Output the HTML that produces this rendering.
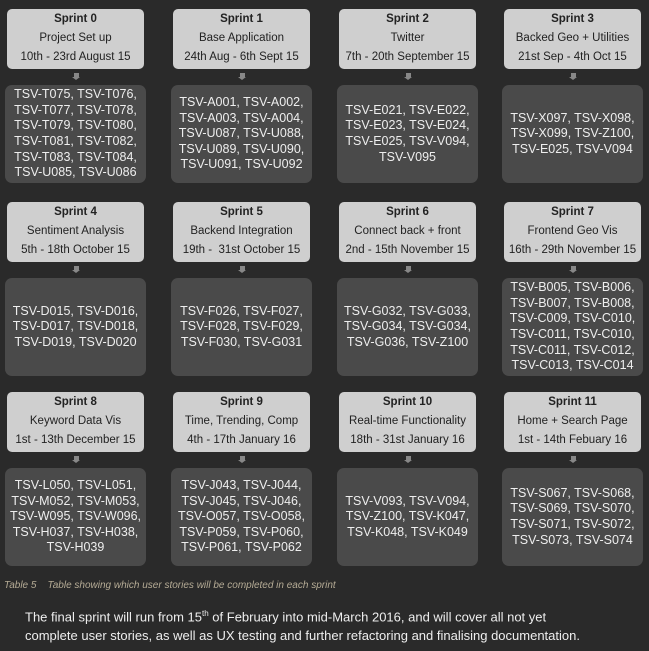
<!DOCTYPE html>
<html><head><meta charset="utf-8"><style>
body{margin:0;width:649px;height:651px;background:#2a2a2a;position:relative;overflow:hidden;font-family:"Liberation Sans",sans-serif}
.h{position:absolute;width:137px;height:60px;background:#cfcfcf;border-radius:5px;text-align:center;color:#222;font-size:11.5px;line-height:19px;padding-top:1px;box-sizing:border-box}
.h b{font-size:11.5px}
.d{position:absolute;width:141px;height:98px;background:#4a4a4a;border-radius:7px;color:#eee;font-size:12.5px;line-height:15.6px;text-align:center;display:flex;align-items:center;justify-content:center}
.a{position:absolute;width:5px;height:4px;background:#888}
.a:after{content:"";position:absolute;left:-2px;top:4px;border-left:4.5px solid transparent;border-right:4.5px solid transparent;border-top:3px solid #888}
.cap{position:absolute;left:4px;top:580px;font-size:10px;font-style:italic;color:#b5ab95}
.p{position:absolute;left:25px;top:604px;font-size:13px;line-height:19px;color:#eee}
</style></head><body>

<div class="h" style="left:7px;top:9px"><b>Sprint 0</b><br>Project Set up<br>10th - 23rd August 15</div>
<div class="a" style="left:74px;top:73px"></div>
<div class="d" style="left:5px;top:85px">TSV-T075, TSV-T076,<br>TSV-T077, TSV-T078,<br>TSV-T079, TSV-T080,<br>TSV-T081, TSV-T082,<br>TSV-T083, TSV-T084,<br>TSV-U085, TSV-U086</div>

<div class="h" style="left:173px;top:9px"><b>Sprint 1</b><br>Base Application<br>24th Aug - 6th Sept 15</div>
<div class="a" style="left:240px;top:73px"></div>
<div class="d" style="left:171px;top:85px">TSV-A001, TSV-A002,<br>TSV-A003, TSV-A004,<br>TSV-U087, TSV-U088,<br>TSV-U089, TSV-U090,<br>TSV-U091, TSV-U092</div>

<div class="h" style="left:339px;top:9px"><b>Sprint 2</b><br>Twitter<br>7th - 20th September 15</div>
<div class="a" style="left:406px;top:73px"></div>
<div class="d" style="left:337px;top:85px">TSV-E021, TSV-E022,<br>TSV-E023, TSV-E024,<br>TSV-E025, TSV-V094,<br>TSV-V095</div>

<div class="h" style="left:504px;top:9px"><b>Sprint 3</b><br>Backed Geo + Utilities<br>21st Sep - 4th Oct 15</div>
<div class="a" style="left:571px;top:73px"></div>
<div class="d" style="left:502px;top:85px">TSV-X097, TSV-X098,<br>TSV-X099, TSV-Z100,<br>TSV-E025, TSV-V094</div>

<div class="h" style="left:7px;top:202px"><b>Sprint 4</b><br>Sentiment Analysis<br>5th - 18th October 15</div>
<div class="a" style="left:74px;top:266px"></div>
<div class="d" style="left:5px;top:278px">TSV-D015, TSV-D016,<br>TSV-D017, TSV-D018,<br>TSV-D019, TSV-D020</div>

<div class="h" style="left:173px;top:202px"><b>Sprint 5</b><br>Backend Integration<br>19th -&nbsp; 31st October 15</div>
<div class="a" style="left:240px;top:266px"></div>
<div class="d" style="left:171px;top:278px">TSV-F026, TSV-F027,<br>TSV-F028, TSV-F029,<br>TSV-F030, TSV-G031</div>

<div class="h" style="left:339px;top:202px"><b>Sprint 6</b><br>Connect back + front<br>2nd - 15th November 15</div>
<div class="a" style="left:406px;top:266px"></div>
<div class="d" style="left:337px;top:278px">TSV-G032, TSV-G033,<br>TSV-G034, TSV-G034,<br>TSV-G036, TSV-Z100</div>

<div class="h" style="left:504px;top:202px"><b>Sprint 7</b><br>Frontend Geo Vis<br>16th - 29th November 15</div>
<div class="a" style="left:571px;top:266px"></div>
<div class="d" style="left:502px;top:278px">TSV-B005, TSV-B006,<br>TSV-B007, TSV-B008,<br>TSV-C009, TSV-C010,<br>TSV-C011, TSV-C010,<br>TSV-C011, TSV-C012,<br>TSV-C013, TSV-C014</div>

<div class="h" style="left:7px;top:392px"><b>Sprint 8</b><br>Keyword Data Vis<br>1st - 13th December 15</div>
<div class="a" style="left:74px;top:456px"></div>
<div class="d" style="left:5px;top:468px">TSV-L050, TSV-L051,<br>TSV-M052, TSV-M053,<br>TSV-W095, TSV-W096,<br>TSV-H037, TSV-H038,<br>TSV-H039</div>

<div class="h" style="left:173px;top:392px"><b>Sprint 9</b><br>Time, Trending, Comp<br>4th - 17th January 16</div>
<div class="a" style="left:240px;top:456px"></div>
<div class="d" style="left:171px;top:468px">TSV-J043, TSV-J044,<br>TSV-J045, TSV-J046,<br>TSV-O057, TSV-O058,<br>TSV-P059, TSV-P060,<br>TSV-P061, TSV-P062</div>

<div class="h" style="left:339px;top:392px"><b>Sprint 10</b><br>Real-time Functionality<br>18th - 31st January 16</div>
<div class="a" style="left:406px;top:456px"></div>
<div class="d" style="left:337px;top:468px">TSV-V093, TSV-V094,<br>TSV-Z100, TSV-K047,<br>TSV-K048, TSV-K049</div>

<div class="h" style="left:504px;top:392px"><b>Sprint 11</b><br>Home + Search Page<br>1st - 14th Febuary 16</div>
<div class="a" style="left:571px;top:456px"></div>
<div class="d" style="left:502px;top:468px">TSV-S067, TSV-S068,<br>TSV-S069, TSV-S070,<br>TSV-S071, TSV-S072,<br>TSV-S073, TSV-S074</div>

<div class="cap">Table 5&nbsp;&nbsp;&nbsp;&nbsp;Table showing which user stories will be completed in each sprint</div>
<div class="p">The final sprint will run from 15<sup style="font-size:8px">th</sup> of February into mid-March 2016, and will cover all not yet<br>complete user stories, as well as UX testing and further refactoring and finalising documentation.</div>
</body></html>
